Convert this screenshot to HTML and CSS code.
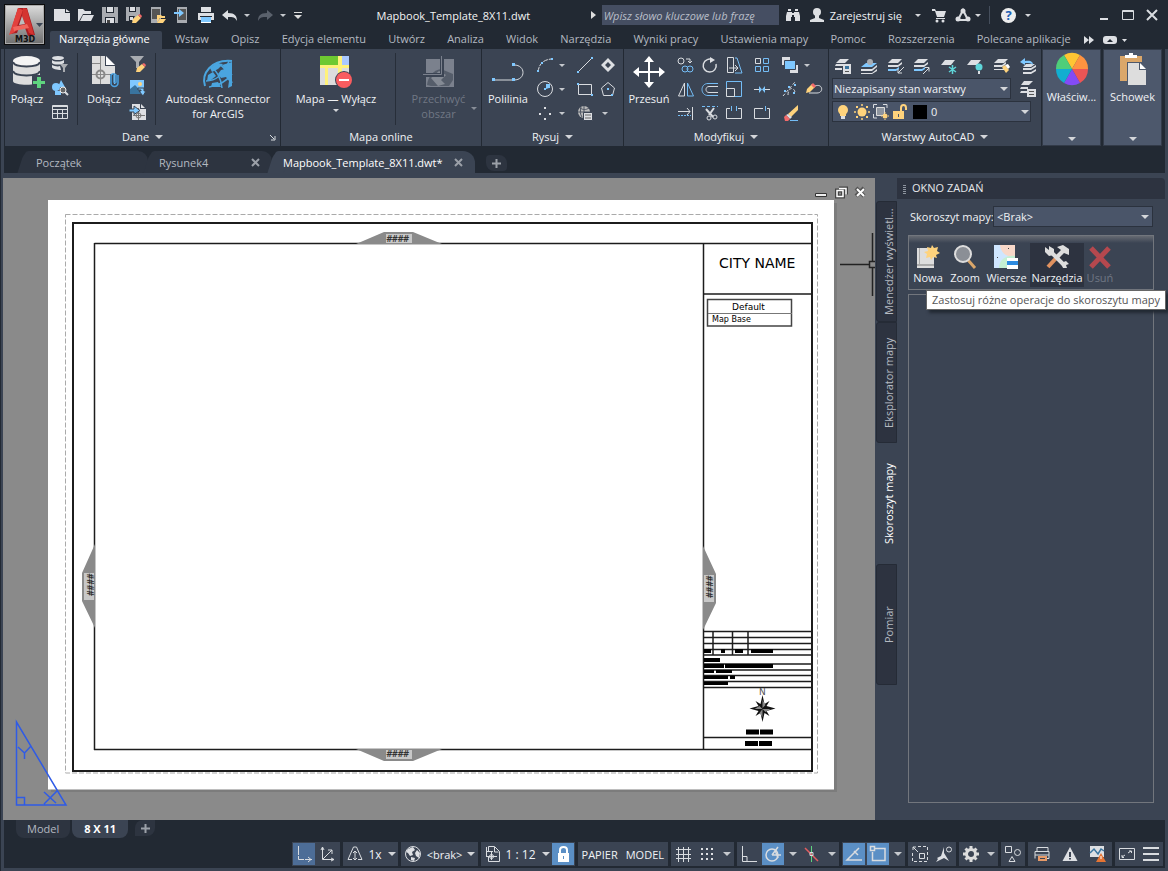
FILE: index.html
```html
<!DOCTYPE html>
<html lang="pl">
<head>
<meta charset="utf-8">
<title>Mapbook_Template_8X11.dwt</title>
<link rel="stylesheet" href="styles.css">
</head>
<body>
<div class="app">
<header class="top">
  <button class="app-menu" aria-label="Menu aplikacji">
    <svg width="40" height="40" viewBox="0 0 40 40"><path fill="#a61d22" d="M13 3h9l8 27-7 1-3-8h-6l-2 5-7 1z"/><path fill="#e2413d" d="M13 3l5 2-8 22-6 3z"/><path fill="#d43431" d="M18 3l4 1 7 26-5-2-7-17z"/><path fill="#f0655c" d="M8 22l14-3 2 4-15 3z"/><path fill="#bdbdbd" d="M17 11l3 8-6 1z"/><path fill="#3c4655" d="M31 18h7l-3.500 4z"/><text x="10" y="37" class="m3d">M3D</text></svg>
  </button>
  <div class="top-main">
    <div class="titlebar">
      <div class="qat">
        <button aria-label="Nowy"><svg class="i"><path class="w" d="M0 2h11v4h5v8H0zM12 2l4 3h-4z"/></svg></button>
        <button aria-label="Otwórz"><svg class="i"><path class="w" d="M0 2h5l2 2h6v3H5l-4 7H0zM5 8h11l-3 6H2z"/></svg></button>
        <button aria-label="Zapisz"><svg class="i"><path class="g" d="M0 0h16v16H0z"/><path fill="#222933" d="M4 0h8v6H4zM3 10h10v6H3z"/><path class="w" d="M5 0h6v5H5zM4 11h8v5H4z"/><path fill="#444" d="M5 13h3v3H5z"/></svg></button>
        <button aria-label="Zapisz jako"><svg class="i"><path class="g" d="M0 0h14v7L7 14H0z"/><path fill="#222933" d="M3 0h7v5H3zM3 9h6l-3 5H3z"/><path class="w" d="M4 0h5v4H4zM4 10h3v3H4z"/><path class="y" d="M6 16l1-4 5-4 3 3-5 5z"/><path class="r" d="M12 8l2-1 2 2-1 2z"/></svg></button>
        <button aria-label="Otwórz z urządzenia"><svg class="i"><path class="g" d="M1 0h10v16H1z"/><path fill="#555" d="M2 2h8v10H2z"/><path class="y" d="M7 8h4l1 1h3v2h-5l-3 4zM10 12h6l-3 4H7z"/></svg></button>
        <button aria-label="Zapisz na urządzeniu"><svg class="i"><path class="g" d="M3 0h10v16H3z"/><path fill="#555" d="M4 2h8v11H4z"/><path class="b" d="M0 5h5V2l5 4-5 4V7H0z"/></svg></button>
        <button aria-label="Drukuj"><svg class="i"><path class="w" d="M3 0h10v5H3zM0 6h16v7H0z"/><path fill="#222933" d="M0 5h16v1H0zM2 9h12v1H2z"/><path class="b" d="M3 10h10v6H3z"/><path stroke="#fff" d="M3 15.500h10"/></svg></button>
        <button aria-label="Cofnij"><svg class="i"><path class="w" d="M0 8l6-5v3c7 0 9 3 9 8-2-4-4-4-9-4v3z"/></svg></button>
        <button class="dd" aria-label="Lista cofania"></button>
        <button aria-label="Ponów"><svg class="i"><path fill="#5a616c" d="M15 8L9 3v3C2 6 0 9 0 14c2-4 4-4 9-4v3z"/></svg></button>
        <button class="dd" aria-label="Lista ponawiania"></button>
        <button class="qat-more" aria-label="Dostosuj"></button>
      </div>
      <h1>Mapbook_Template_8X11.dwt</h1>
      <div class="info">
        <button class="rt" aria-label="Rozwiń wyszukiwanie"></button>
        <input class="search" type="search" placeholder="Wpisz słowo kluczowe lub frazę" aria-label="Szukaj">
        <button aria-label="Szukaj"><svg class="i"><path class="w" d="M3 2h3v2H3zM10 2h3v2h-3zM2 5h5v5H6v4H1v-5zM9 5h5l1 4v5h-5v-4H9zM7 6h2v2H7z"/></svg></button>
        <button class="sign"><svg class="i"><circle cx="8" cy="5" r="4" class="w"/><path class="w" d="M6 8h4v3l5 2v2H1v-2l5-2z"/></svg>Zarejestruj się<i class="dn"></i></button>
        <button aria-label="Sklep"><svg class="i"><path class="w" d="M1 2h3l1 2h10l-2 6H6L4 4H1zM5 11h9v1H5z"/><circle class="w" cx="6" cy="14" r="1.500"/><circle class="w" cx="12" cy="14" r="1.500"/></svg></button>
        <button class="a360" aria-label="Autodesk 360"><svg class="i"><path class="s" stroke-width="2" d="M8 3l5 10H3z"/><circle class="w" cx="8" cy="4" r="2.500"/><circle class="w" cx="3" cy="12" r="2.500"/><circle class="w" cx="13" cy="12" r="2.500"/></svg><i class="dn"></i></button>
        <span class="bar"></span>
        <button class="help" aria-label="Pomoc"><b>?</b><i class="dn"></i></button>
      </div>
      <div class="win">
        <button aria-label="Minimalizuj"><svg class="i"><path class="w" d="M4 10h8v2H4z"/></svg></button>
        <button aria-label="Maksymalizuj"><svg class="i"><path class="s" d="M2.500 2.500h11v9h-11zM2 3.500h12"/></svg></button>
        <button aria-label="Zamknij"><svg class="i"><path class="s" stroke-width="2" d="M3 2l10 10M13 2L3 12"/></svg></button>
      </div>
    </div>
    <nav class="rtabs">
      <a class="on" href="#">Narzędzia główne</a><a href="#">Wstaw</a><a href="#">Opisz</a><a href="#">Edycja elementu</a><a href="#">Utwórz</a><a href="#">Analiza</a><a href="#">Widok</a><a href="#">Narzędzia</a><a href="#">Wyniki pracy</a><a href="#">Ustawienia mapy</a><a href="#">Pomoc</a><a href="#">Rozszerzenia</a><a href="#">Polecane aplikacje</a>
      <button class="rt-end" aria-label="Opcje wstążki"><svg width="42" height="16"><path class="w" d="M0 4l5 4-5 4zM5 4l5 4-5 4z"/><rect class="w" x="19" y="4" width="14" height="8" rx="3"/><path fill="#222933" d="M23 10h6l-3-3z"/><path class="w" d="M38 7h5l-2.500 3z"/></svg></button>
    </nav>
  </div>
</header>

<div class="frame">
<section class="ribbon">
  <div class="panel p-dane">
    <div class="pb">
      <button class="big w44"><svg class="I"><path fill="#ddd" d="M2 5v20c0 5 27 5 27 0V5z"/><ellipse cx="15.500" cy="5" rx="13.500" ry="5" fill="#f4f4f4"/><path fill="none" stroke="#3b4453" stroke-width="2" d="M2 6c2 6 25 6 27 0M2 15c2 6 25 6 27 0"/><path fill="#3b4453" d="M21 19h13v13H21z"/><path fill="#5fd47f" d="M26 21h4v4h4v3h-4v4h-4v-4h-4v-3h4z"/></svg>Połącz</button>
      <div class="col">
        <button aria-label="Filtruj dane"><svg class="i"><ellipse class="w" cx="6" cy="2" rx="6" ry="2"/><path class="w" d="M0 4c2 2 9 2 12 0v3c-3 2-10 2-12 0zM0 9c2 1 6 2 8 1l1 4c-4 0-9-1-9-3z"/><path class="g" d="M8 8h8l-3 4v4h-2v-4z"/></svg></button>
        <button aria-label="Szukaj obiektów"><svg class="i"><circle class="b" cx="4" cy="7" r="4"/><path class="b" d="M9 0l4 7H6zM3 11h6v4H3z"/><circle cx="11" cy="10" r="3" fill="#666" stroke="#eee"/><path class="s" stroke-width="2" d="M13 12l3 3"/></svg></button>
        <button aria-label="Tabela danych"><svg class="i"><path class="s" d="M.5 1.500h15v13H.5zM0 2.500h16M0 5.500h16M0 9.500h16M5.500 5v9M10.500 5v9"/></svg></button>
      </div>
      <span class="sep"></span>
      <button class="big w52"><svg class="I"><path fill="#ddd" d="M4 0h13v10h10v18H4z"/><path fill="#fff" d="M18 0l9 9h-9z"/><path fill="none" stroke="#888" d="M4 7.500h9M12.500 0v28M4 18.500h20"/><circle cx="12.500" cy="18.500" r="4" fill="none" stroke="#888" stroke-width="2"/><path fill="none" stroke="#3b4453" stroke-width="4" d="M24 18v10"/><path fill="none" stroke="#4ba3e3" stroke-width="1.500" d="M26 19v7a1 1 0 002 0v-7a3 3 0 00-5 0v8a3.500 3.500 0 007 0v-8"/></svg>Dołącz</button>
      <div class="col c16">
        <button aria-label="Filtr"><svg class="i"><path class="g" d="M0 0h14L9 6v6H6V6z"/><path class="y" d="M6 16l1-4 5-4 3 3-5 5z"/><path class="r" d="M12 8l2-1 2 2-1 2z"/></svg></button>
        <button aria-label="Wstaw obraz"><svg class="i"><path class="b" d="M0 0h14v14H0z"/><path fill="#39749f" d="M0 9l5-4 5 5 4-2v6H0z"/><circle cx="10" cy="4" r="2" class="y"/><path stroke="#3b4453" fill="#7fc8ff" d="M8 8h6v3h2l-3 5-4-5h2v-1H8z"/></svg></button>
        <button aria-label="Importuj mapę"><svg class="i"><path class="w" d="M2 0h8v5h6v11H2z"/><path class="w" d="M11 0l4 4h-4z"/><path stroke="#777" fill="none" d="M8.500 4v12M3 11.500h12"/><circle cx="8.500" cy="11.500" r="2.500" fill="none" stroke="#777"/><path class="b" stroke="#3b4453" d="M-1 5h5V2l6 4.500-6 4V8h-5z"/></svg></button>
      </div>
      <span class="sep s8"></span>
      <button class="big grow"><svg class="I"><g fill="none" stroke="#4aa5df" stroke-width="1.500"><path stroke-width="2" d="M3 30C-1 18 9 3 30 5"/><path d="M9 12c5 1 10 10 11 20M4 25c9 0 18-6 23-20M7 31c8-1 16-4 23-13M15 7c6 3 12 9 15 20"/></g><path fill="#4aa5df" d="M8 12l6-5 7 1-5 5-6 3zM20 9l10-3v24l-4 2 1-7-3-4-5 1-3-4 3-4 4-1zM6 19l5-3 3 4-5 4-4 1zM10 27l6-1 3 5H9z"/></svg>Autodesk Connector<br>for ArcGIS</button>
    </div>
    <div class="pt">Dane <i class="dn"></i><svg class="launch" width="7" height="7"><path class="s" d="M1 1l4 4M6 2v4H2"/></svg></div>
  </div>
  <div class="panel p-online">
    <div class="pb">
      <button class="big w110"><svg class="I"><path fill="#ddd" d="M0 0h29v29H0z"/><path fill="#6ec931" d="M0 0h18v9H0z"/><path fill="#a9c8ff" d="M22 0h7v9h-7z"/><path fill="#fff27a" d="M0 9h29v3H0zM18 0h4v29h-4zM5 12h3v17H5z"/><circle cx="24" cy="24" r="9" fill="#3b4453"/><circle cx="24" cy="24" r="8" fill="#f95c5f"/><path fill="#fff" d="M19 23h10v2H19z"/></svg>Mapa — Wyłącz<i class="dn"></i></button>
      <span class="sep s4"></span>
      <button class="big grow off" disabled><svg class="I"><path fill="#7b818d" d="M3 3h28v28H3z"/><path fill="#555d6a" d="M4 29c1-8 6-15 14-16l12 5v6l-4 6H8z"/><path fill="#848a94" d="M8 22l8-7 7 4-5 5 4 4-7 2z"/><path fill="none" stroke="#3b4453" stroke-width="4" d="M0 19h19V0"/><path fill="none" stroke="#7b818d" d="M0 18.500h18.500V0"/></svg>Przechwyć<br>obszar<i class="dn"></i></button>
    </div>
    <div class="pt">Mapa online</div>
  </div>
  <div class="panel p-rysuj">
    <div class="pb">
      <button class="big w52"><svg class="I"><path class="s" d="M2 24h19M22 9c12 0 12 15 0 15"/><path class="b" d="M0 22h3v3H0zM20 22h3v3h-3zM20 7h3v3h-3z"/></svg>Polilinia</button>
      <div class="grid g-rysuj">
        <button aria-label="Łuk"><svg class="i"><path class="s" stroke-dasharray="5 1" d="M1 15C2 7 6 3 14 2"/><path class="b" d="M0 13h2v2H0zM4 5h2v2H4zM14 1h2v2h-2z"/></svg></button><button class="dd" aria-label="Więcej łuków"></button>
        <button aria-label="Linia"><svg class="i"><path class="s" d="M1 15L15 1"/><path class="b" d="M0 14h2v2H0zM14 0h2v2h-2z"/></svg></button>
        <button aria-label="Region"><svg class="i"><path fill-rule="evenodd" class="w" d="M8 1l7 7-7 7-7-7zM8 5L5 8l3 3 3-3z"/></svg></button>
        <button aria-label="Okrąg"><svg class="i"><circle class="s" cx="8" cy="8" r="7.500"/><path class="b" d="M7 7h2v2H7zM9 3h4v4h-1L9 8z"/></svg></button><button class="dd" aria-label="Więcej okręgów"></button>
        <button aria-label="Prostokąt"><svg class="i"><path class="s" d="M1.500 3.500h13v10h-13z"/><path class="b" d="M0 2h2v2H0zM14 13h2v2h-2z"/></svg></button>
        <button aria-label="Wielobok"><svg class="i"><path class="s" d="M8 1.500L14.500 7l-2 7.500h-9L1.500 7z"/><path class="b" d="M7 7h2v2H7zM11 13h2v2h-2z"/></svg></button>
        <button aria-label="Punkt"><svg class="i"><path class="w" d="M7 2h2v2H7zM2 8h2v2H2zM12 8h2v2h-2zM7 13h2v2H7z"/></svg></button><button class="dd" aria-label="Więcej punktów"></button>
        <button aria-label="Globus"><svg class="i"><circle cx="7" cy="7" r="6" fill="#bbb"/><path stroke="#4a5260" fill="none" d="M7 1v12M1 7h12M3 3c3 2 6 2 9 0M4 2c-1 4-1 7 1 10"/><path class="w" stroke="#3b4453" d="M6.500 7.500h9v8h-9z"/><path stroke="#666" d="M8 10h6M8 13h6"/></svg></button><button class="dd end" aria-label="Więcej opcji"></button>
      </div>
    </div>
    <div class="pt">Rysuj <i class="dn"></i></div>
  </div>
  <div class="panel p-mod">
    <div class="pb">
      <button class="big w50"><svg class="I"><path fill="#fff" d="M16 0l5 6h-4v9h9v-4l6 5-6 5v-4h-9v9h4l-5 6-5-6h4v-9H6v4l-6-5 6-5v4h9V6h-4z"/></svg>Przesuń</button>
      <div class="grid g-mod">
        <button aria-label="Kopiuj"><svg class="i"><circle class="s" cx="3" cy="4" r="3"/><circle class="bs" cx="7" cy="12" r="3"/><circle class="bs" cx="12" cy="12" r="3"/><path class="s" d="M8 2h4v4M10 4l2 2 2-2"/></svg></button>
        <button aria-label="Obrót"><svg class="i"><path class="s" stroke-width="1.500" d="M11 3a6.500 6.500 0 103 4"/><path class="w" d="M8 0l5 3-5 3z"/></svg></button>
        <button aria-label="Rozciągnij"><svg class="i"><path class="s" d="M1.500 .5h6v15h-6zM3 11h8M9 8l3 3-3 3"/><path class="bs" d="M9 1h2l5 15H9"/></svg></button>
        <button aria-label="Szyk"><svg class="i"><path class="s" d="M1.500 1.500h5v5h-5z"/><path class="bs" d="M9.500 1.500h5v5h-5zM1.500 9.500h5v5h-5zM9.500 9.500h5v5h-5z"/></svg></button>
        <button aria-label="Kolejność"><svg class="i"><path class="w" d="M0 0h8v4H4v4H0zM8 12h5V8h3v8H8z"/><path class="b" stroke="#3b4453" d="M2.500 3.500h11v9h-11z"/></svg></button><button class="dd" aria-label="Więcej kolejności"></button>
        <button aria-label="Lustro"><svg class="i"><path class="s" d="M6.500 2v13H.5z"/><path class="bs" d="M9.500 2v13h6z"/></svg></button>
        <button aria-label="Odsunięcie"><svg class="i"><path class="bs" d="M16 2.500H6c-8 0-8 12 0 12h10"/><path class="s" d="M16 5.500H7c-4 0-4 6 0 6h9"/></svg></button>
        <button aria-label="Skala"><svg class="i"><path class="bs" d="M.5 8V.5h15v15H8"/><path class="s" d="M.5 7.500h8v8h-8z"/></svg></button>
        <button aria-label="Dołącz"><svg class="i"><path class="s" d="M0 8.500h5M11 8.500h5"/><path class="b" d="M5 5l3 3.500L5 12zM11 5L8 8.500l3 3.500z"/></svg></button>
        <button aria-label="Edytuj polilinię"><svg class="i"><path class="s" d="M1 15L13 1M6 14c0-8 6-8 7-3" stroke-dasharray="3 2"/><path class="b" d="M2 9h2v2H2zM6 5h2v2H6zM12 3h2v2h-2zM11 11h2v2h-2z"/></svg></button>
        <button aria-label="Edytuj splajn"><svg class="i"><path class="s" d="M9 5c8-3 9 7 2 7H3"/><path class="y" d="M0 12l1-4 5-5 3 3-5 5z"/><path class="r" d="M5 4l2-2 3 3-2 2z"/></svg></button>
        <button aria-label="Wydłuż"><svg class="i"><path class="s" d="M0 6.500h12M14.500 2v13M9 3l3 3.500L9 10"/><path class="bs" stroke-dasharray="2 1" d="M0 10.500h13"/></svg></button>
        <button aria-label="Utnij"><svg class="i"><path class="bs" stroke-dasharray="3 2" d="M0 1.500h16"/><path class="s" stroke-width="2" d="M4 4l7 8M12 3L7 10"/><circle class="s" cx="7" cy="13" r="2"/><circle class="s" cx="13" cy="12" r="2"/></svg></button>
        <button aria-label="Przerwij"><svg class="i"><path class="s" d="M4 3.500H.5v10h15v-10H12"/><path class="bs" d="M5.500 1v5M10.500 1v5"/></svg></button>
        <button aria-label="Przerwij w punkcie"><svg class="i"><path class="s" d="M9 3.500H.5v10h15v-10H13"/><path class="bs" d="M11.500 1v5"/></svg></button>
        <button aria-label="Wymaż"><svg class="i"><path class="y" d="M6 9l10-9v5l-7 7z"/><path class="w" d="M4 10l2-1 4 3-2 2z"/><path class="r" d="M2 12l2-2 4 4-2 2H3z"/><path class="bs" d="M8 15.500h8"/></svg></button>
      </div>
    </div>
    <div class="pt">Modyfikuj <i class="dn"></i></div>
  </div>
  <div class="panel p-war">
    <div class="pb war">
      <div class="wr">
        <button aria-label="Właściwości warstw"><svg class="i"><path class="w" d="M5 1h9l-4 4H1zM1 6h7v2H0zM0 10h7v2H0z"/><path class="w" d="M8 6h8v10H8z"/><path fill="#39749f" d="M10 8h4v3h-4z"/><path stroke="#555" d="M10 13.500h4"/></svg></button>
        <button aria-label="Ustaw bieżącą"><svg class="i"><path class="b" d="M5 5h11l-5 4H0z"/><path class="w" d="M0 11h11l5-4v2l-5 4H0zM0 15h11l5-4v2l-5 3H0z"/><circle class="g" cx="9" cy="4" r="3"/></svg></button>
        <button aria-label="Dopasuj"><svg class="i"><path class="w" d="M4 1h10l-4 4H0zM0 7h10l4-3v2l-4 3H0z"/><path class="b" d="M0 11h8l3-2v2l-3 2H0z"/><path class="s" d="M16 9l-6 6M10 11v4h4"/></svg></button>
        <button aria-label="Poprzednia"><svg class="i"><path class="w" d="M4 1h10l-4 4H0zM0 7h10l4-3v2l-4 3H0z"/><path class="b" d="M0 11h8l3-2v2l-3 2H0z"/><path class="s" d="M9 16l6-6M11 9.500h4v4"/></svg></button>
        <button aria-label="Zamroź"><svg class="i"><path class="w" d="M4 2h10l-4 5H0z"/><path stroke="#5fd6da" stroke-width="1.500" d="M11.500 7v9M8 9l7 5M15 9l-7 5"/></svg></button>
        <button aria-label="Wyłącz"><svg class="i"><path class="w" d="M4 2h10l-4 5H0z"/><circle cx="12" cy="9" r="3.500" fill="#5fd6da"/><path class="w" d="M11 13h2v3h-2z"/></svg></button>
        <button aria-label="Dopasuj warstwę"><svg class="i"><path class="w" d="M4 1h10l-4 4H0zM0 7h8l4-3v2l-4 3H0zM0 11h8l2-1v2H0z"/><path class="y" d="M8 9l3-2 4 5-3 3z"/><path fill="#fff" d="M11 7l3-1 2 3-2 2z"/></svg></button>
        <button aria-label="Przywróć"><svg class="i"><path class="w" d="M6 6h9l-4 3H3zM3 10h8l5-3v2l-5 3H3zM3 14h8l5-3v2l-5 3H3z"/><path class="b" d="M0 4l5-4v3c6-1 8 1 8 4-2-2-4-2-8-2v2z"/></svg></button>
      </div>
      <div class="wr2"><select aria-label="Stan warstwy"><option>Niezapisany stan warstwy</option></select>
        <button aria-label="Menedżer stanów"><svg class="i"><path class="w" d="M4 0h9L9 4H1zM1 6h7v2H0zM1 10h6v2H0zM7 8h9v8H7z"/><path stroke="#555" d="M9 10.500h5M9 13.500h5"/></svg></button></div>
      <div class="layer">
        <button aria-label="Widoczność"><svg class="i"><circle class="y" cx="8" cy="6" r="5"/><path class="y" d="M5 9h6v3H5z"/><path class="w" d="M6 12h4v3H6z"/></svg></button>
        <button aria-label="Zamrożenie"><svg class="i"><circle class="y" cx="8" cy="8" r="4.500"/><path stroke="#ffd37c" stroke-width="1.500" stroke-dasharray="2 12" d="M8 0v16M0 8h16"/><path class="y" d="M2 2h2v2H2zM12 2h2v2h-2zM2 12h2v2H2zM12 12h2v2h-2z"/></svg></button>
        <button aria-label="Rzutnia"><svg class="i"><path class="s" d="M.5 4V.5H4M10 .5h4V4M.5 10v4H4"/><path fill="#8e959f" stroke="#ddd" d="M3.500 3.500h8v8h-8z"/><circle class="y" cx="12" cy="12" r="2.500"/><path stroke="#ffd37c" stroke-dasharray="1 6" d="M12 8v8M8 12h8"/></svg></button>
        <button aria-label="Blokada"><svg class="i"><path class="y" d="M1 7h11v8H1z"/><path fill="none" stroke="#ffd37c" stroke-width="2" d="M9 8V4c0-4 5-4 5 0v2"/><path fill="#4d586c" d="M6 10h1v3H6z"/></svg></button>
        <span class="swatch"></span>
        <select aria-label="Warstwa"><option>0</option></select>
      </div>
    </div>
    <div class="pt">Warstwy AutoCAD <i class="dn"></i></div>
  </div>
  <button class="fold"><svg class="I"><g transform="translate(16 16)"><path fill="#ffc533" d="M0 0L-8-14A16 16 0 018-14z"/><path fill="#ff9340" d="M0 0L8-14A16 16 0 0116 0z"/><path fill="#ec5555" d="M0 0h16A16 16 0 018 14z"/><path fill="#844bf5" d="M0 0L8 14A16 16 0 01-8 14z"/><path fill="#12aed0" d="M0 0L-8 14A16 16 0 01-16 0z"/><path fill="#4fce7a" d="M0 0h-16A16 16 0 01-8-14z"/></g></svg>Właściw...<i class="dn"></i></button>
  <button class="fold"><svg class="I"><path fill="#dba76a" d="M3 3h22v25H3z"/><path fill="#fff" d="M8 5V2h4V0h4v2h4v3z"/><path fill="#4d586c" d="M10 9h20v23H10z"/><path fill="#ddd" d="M11 10h11v7h7v15H11z"/><path fill="#fff" d="M23 10l6 6h-6z"/></svg>Schowek<i class="dn"></i></button>
</section>

<div class="ftabs">
  <div class="ft t1"><a href="#">Początek</a></div>
  <div class="ft t2"><a href="#">Rysunek4</a><button aria-label="Zamknij Rysunek4"><svg class="x"><path d="M1 1l7 7M8 1L1 8"/></svg></button></div>
  <div class="ft t3 on"><a href="#">Mapbook_Template_8X11.dwt*</a><button aria-label="Zamknij rysunek"><svg class="x"><path d="M1 1l7 7M8 1L1 8"/></svg></button></div>
  <button class="plus" aria-label="Nowy rysunek"><svg class="x"><path d="M4.500 0v9M0 4.500h9"/></svg></button>
</div>

<main class="work">
  <div class="canvas">
  <svg class="sheet" viewBox="3 178 872 642" preserveAspectRatio="xMidYMid slice">
    <rect x="51" y="203" width="786" height="589" fill="#7c7c7c"/>
    <rect x="48" y="200" width="786" height="589.500" fill="#fff"/>
    <path d="M65.500 214.500h752v558.500h-752z" class="dash"/>
    <g class="ln"><path stroke-width="2" d="M73 223h739v548H73z"/><path d="M94.500 243.500H812M94.500 243v507M94 749.500h718M703.500 243v507M704 294h108"/><path stroke="#444" d="M707.500 299.500h84V326h-84z"/><path stroke="#777" stroke-width="1" d="M708 313.500h84"/>
    <path d="M704 631.500h108M704 637.500h108M704 643.500h108M704 649.500h108M704 655h108M704 664h108M704 670h108M704 675.500h108M704 681.500h108M704 687.500h108M713 631v24M732.500 631v24M748 631v24M704 737.500h108"/></g>
    <path d="M704 649h7v4h-7zM721 649h4v4h-4zM735 649h8v4h-8zM751 649h22v4h-22zM704 658h16v4h-16zM704 664h20v4h-20zM725 664h48v4h-48zM704 670h10v3h-10zM716 670h16v3h-16zM704 676h24v3h-24zM730 676h5v3h-5zM704 682h24v3h-24zM746 729.500h13v5h-13zM760 729.500h13v5h-13zM745 741h13v5h-13zM759 741h13v5h-13z"/>
    <text class="city" x="719" y="268">CITY NAME</text>
    <text class="leg" x="732" y="310">Default</text><text class="leg small" x="712" y="322">Map Base</text>
    <text class="north" x="759" y="695">N</text>
    <path fill="#111" d="M762.500 695l2 9 5-3-3 5 9 2.500-9 2.500 3 5-5-3-2 9-2-9-5 3 3-5-9-2.500 9-2.500-3-5 5 3z"/><path fill="#888" d="M762.500 700v8l3-3zM762.500 709h8l-5 3zM762.500 709v8l-3-4zM762.500 709h-8l5-3z"/>
    <g fill="#8a8a8a"><path d="M356 244l28-12h29l29 12zM356 749l28 12h29l29-12zM95 544l-13 29v28l13 27zM703 546l13 28v29l-13 27z"/></g>
    <g fill="#c8c8c8"><path d="M386 234h26v9h-26zM386 750h26v9h-26zM84 573h10v27H84zM704 575h10v27h-10z"/></g>
    <g class="hash"><text x="386" y="242">####</text><text x="386" y="757">####</text><text transform="translate(87 573) rotate(90)">####</text><text transform="translate(706 575) rotate(90)">####</text></g>
    <path fill="none" stroke="#2f5be6" stroke-width="1.500" d="M16.500 722v83H66zM16.500 797.500h8v8M18 747l6.500 6 6.500-7M24.500 753v6M44 792l12 11M57 791l-13 13"/>
    <path fill="none" stroke="#222" stroke-width="1.500" d="M840 264.500h29M872.500 233v28M872.500 268v28M869.500 261.500h7v6h-7z"/>
    <g stroke="#333" fill="none"><path fill="#eee" d="M815.500 193.500h11v3h-11z"/><path stroke="#444" stroke-width="4" d="M837 190.500h6v6h-6zM839 188.500h7v6"/><path stroke="#fff" stroke-width="1.500" d="M837 190.500h6v6h-6zM839 188.500h7v6"/><path stroke="#555" stroke-width="4" d="M856 188l8 8M864 188l-8 8"/><path stroke="#fff" stroke-width="2" d="M857 189l7 7M864 189l-7 7"/></g>
  </svg>
  </div>
  <aside class="pane">
    <div class="vtabs"><button>Menedżer wyświetl...</button><button>Eksplorator mapy</button><button class="on">Skoroszyt mapy</button><button>Pomiar</button></div>
    <div class="task">
      <h2>OKNO ZADAŃ</h2>
      <div class="pick"><label for="sk">Skoroszyt mapy:</label><select id="sk"><option>&lt;Brak&gt;</option></select></div>
      <div class="tools">
        <button class="t38"><svg class="m"><path fill="#ddd" d="M2 3h17v20H2z"/><path fill="#aaa" d="M2 19h17v2H2zM4 3h1v16H4z"/><path fill="#ffd37c" d="M17 0l2 3 4-1-1 4 3 2-4 2 1 3-4-1-2 3-1-3-4 1 1-4-3-2 4-1-1-4 4 1z"/></svg>Nowa</button>
        <button class="t36"><svg class="m"><path stroke="#dba76a" stroke-width="3" d="M16 15l7 8"/><circle cx="11" cy="9" r="8" fill="#8b8f96" stroke="#ddd" stroke-width="2"/></svg>Zoom</button>
        <button class="t46"><svg class="m"><path fill="#cfe6ff" d="M0 0h21v23H0z"/><path fill="#f8d8c9" d="M6 0h15v11C14 13 7 9 6 0z"/><path fill="#c5f0d3" d="M5 23c0-8 7-13 16-12v12z"/><path fill="#fff" d="M13 13h11v11H13z"/><path fill="#2d8be0" d="M13 16h11v4H13z"/><path fill="#444" d="M3 12h1v1H3zM14 3h1v1h-1z"/></svg>Wiersze</button>
        <button class="t54 on"><svg class="m"><path stroke="#e0925f" stroke-width="4" d="M4 22L15 10"/><path stroke="#ddd" stroke-width="4" d="M6 6l15 15"/><path fill="#ddd" d="M1 2l4 3V1l5 3v6l-5 1-4-4zM13 2l6-2 6 4v6l-5-2-5 5-3-3 5-5zM17 18l5-2 3 3-3 1 1 3h-4z"/></svg>Narzędzia</button>
        <button class="t36 off" disabled><svg class="m"><path stroke="#b5484e" stroke-width="5" d="M4 3l18 19M22 3L4 22"/></svg>Usuń</button>
        <div class="tip" role="tooltip">Zastosuj różne operacje do skoroszytu mapy</div>
      </div>
      <div class="tree"></div>
    </div>
  </aside>
</main>

<footer>
  <div class="ltabs"><a class="lt" href="#">Model</a><a class="lt on" href="#">8 X 11</a><button class="lplus" aria-label="Nowy układ"><svg class="x"><path d="M4.500 0v9M0 4.500h9"/></svg></button></div>
  <div class="status">
    <div class="sg"><button class="on dim" aria-label="Obszar modelu"><svg class="i"><path class="s" d="M2.500 0v13.500H16M12 11l3 2.500-3 2.500" stroke-dasharray="9 1"/></svg></button><button aria-label="LUW"><svg class="i"><path class="s" d="M2.500 1v12.500H14M3 13L12 4M8 4h4v4M1 4l1.500-3L4 4M11 12l3 1.500-3 1.500"/></svg></button></div>
    <div class="sg"><button aria-label="Skala opisu"><svg class="i"><path class="s" d="M1 13.500L6.500 1h3L15 13.500h-4M1 13.500h4M8 5v9M6 7l2-2 2 2M6 12l2 2 2-2"/></svg></button><button class="tx s31">1x<i class="dn"></i></button></div>
    <div class="sg"><button aria-label="Układ współrzędnych"><svg class="i"><circle cx="8" cy="8" r="7.500" class="s"/><path class="w" d="M3 3l5-2 2 3-3 2 1 3-3 1-2-3-2-1zM12 4l3 3-1 5-3-2-1-3zM6 11l4 1-1 3-3-1z"/></svg></button><button class="tx s54">&lt;brak&gt;<i class="dn"></i></button></div>
    <div class="sg"><button aria-label="Skala rzutni"><svg class="i"><path class="s" d="M3.500 6V.5h6l5 5v10h-11V10M9.500 1v5h4M1 5.500h7M1 10.500h11M6.500 6v8M1.500 1v9"/><circle cx="6.500" cy="10.500" r="2" class="s"/></svg></button><button class="tx s46">1 : 12<i class="dn"></i></button><button class="on" aria-label="Blokada"><svg class="i"><path fill="#fff" d="M3 7h11v9H3z"/><path fill="none" stroke="#fff" stroke-width="2" d="M5 8V4c0-4 7-4 7 0v4"/><path fill="#5b8fc5" d="M8 10h1v3H8z"/></svg></button></div>
    <div class="sg"><button class="tx cap">PAPIER</button><button class="tx cap">MODEL</button></div>
    <div class="sg"><button aria-label="Siatka"><svg class="i"><path class="s" d="M3.500 1v15M8.500 1v15M13.500 1v15M1 3.500h15M1 8.500h15M1 12.500h15"/></svg></button><button aria-label="Skok"><svg class="i"><path class="w" d="M2 2h2v2H2zM7 2h2v2H7zM12 2h2v2h-2zM2 7h2v2H2zM7 7h2v2H7zM12 7h2v2h-2zM2 12h2v2H2zM7 12h2v2H7zM12 12h2v2h-2z"/></svg></button><button class="dd" aria-label="Opcje skoku"></button></div>
    <div class="sg"><button aria-label="Orto"><svg class="i"><path class="s" d="M1.500 0v15.500H16M1 10.500h5v5"/></svg></button><button class="on" aria-label="Biegunowe"><svg class="i"><circle cx="7" cy="9" r="6" class="s" stroke-width="1.500"/><path class="s" stroke-width="1.500" d="M7 9l6-8M7 9h9M10 4l3 8"/></svg></button><button class="dd" aria-label="Opcje biegunowe"></button><button aria-label="Izometria"><svg class="i"><path stroke="#5fd47f" d="M7.500 0v16"/><path stroke="#e35d60" stroke-width="1.500" d="M1 2l13 13"/><path class="s" d="M6 6.500h3v3H6z"/></svg></button><button class="dd" aria-label="Opcje izometrii"></button></div>
    <div class="sg"><button class="on" aria-label="Śledzenie"><svg class="i"><path class="s" stroke-width="1.500" d="M16 14H1L13 2M8 5l4 4"/></svg></button><button class="on" aria-label="Lokalizacja"><svg class="i"><path class="s" stroke-width="1.500" d="M5 2.500h10v12H2.500V6M.5 .5h4v4h-4z"/></svg></button><button class="dd" aria-label="Opcje lokalizacji"></button></div>
    <div class="sg"><button aria-label="Monitor"><svg class="i"><path class="s" stroke-dasharray="3 2" d="M6 .5h9.500v15H.5V6"/><path class="s" d="M7.500 7.500h5v5h-5zM1 1l5 5M1 4V1h3"/></svg></button><button aria-label="Opisy"><svg class="i"><path class="w" d="M8 1v6l5 8-5-3-6 3-2 1 2-3-1-1 4-2z"/><circle cx="13" cy="3.500" r="2.500" class="s"/></svg></button></div>
    <div class="sg"><button aria-label="Ustawienia"><svg class="i"><circle cx="8" cy="8" r="4.500" fill="none" stroke="#ddd" stroke-width="3"/><path stroke="#ddd" stroke-width="3" stroke-dasharray="3 10" d="M8 0v16M0 8h16M2.500 2.500l11 11M13.500 2.500l-11 11"/></svg></button><button class="dd" aria-label="Obszar roboczy"></button></div>
    <div class="sg"><button aria-label="Izoluj obiekty"><svg class="i"><path class="s" d="M.5 .5h6v6h-6zM4 15.500l3-5 3 5z"/><circle class="s" cx="12.500" cy="6.500" r="3"/></svg></button></div>
    <div class="sg print"><button aria-label="Drukowanie"><svg class="i"><path class="s" d="M3 5V1.500h11V5M1 12.500v-7h14v7h-2M1 9h14"/><path fill="#e79a68" d="M4 10h9v5H4z"/><path fill="#3b4453" d="M6 12h5v1H6z"/></svg></button><button aria-label="Ostrzeżenie"><svg class="i"><path class="w" d="M8 1l7.500 14H.5z"/><path fill="#3b4453" d="M7 6h2v5H7zM7 12h2v1.500H7z"/></svg></button><button aria-label="Wydajność"><svg class="i"><path class="w" d="M0 0h14v11H0z"/><path fill="none" stroke="#39749f" stroke-width="1.500" d="M0 7l4-4 4 5 3-5 3 2"/><path fill="#e67433" d="M11 7l5 9H6z"/><path fill="#fff" d="M10.500 10h1v3h-1z"/></svg></button></div>
    <div class="sg"><button aria-label="Pełny ekran"><svg class="i"><path class="s" d="M.5 2.500h15v11H.5zM9 7l3-2M10 5h2.500v2M6 9l-3 2M3 9v2.500h2"/></svg></button><button aria-label="Dostosuj"><svg class="i"><path class="s" stroke-width="2" d="M0 2h16M0 8h16M0 14h16"/></svg></button></div>
  </div>
</footer>
</div>
</div>
</body>
</html>
```
FILE: styles.css
```css
* { box-sizing: border-box; }
body { margin: 0; background: #222933; color: #f0f2f5; font: 11px/15px "Open Sans", "Noto Sans", sans-serif; overflow: hidden; }
button { font: inherit; color: inherit; background: none; border: 0; padding: 0; margin: 0; display: flex; align-items: center; justify-content: center; white-space: nowrap; }
a { color: inherit; text-decoration: none; white-space: nowrap; }
svg { display: block; flex: none; overflow: visible; }
h1, h2 { margin: 0; font: inherit; }
.i { width: 16px; height: 16px; }
.I { width: 32px; height: 32px; }
.m { width: 26px; height: 24px; }
.w { fill: #dddfe3; }
.g { fill: #a9acb1; }
.b { fill: #7fc8ff; }
.y { fill: #ffd37c; }
.r { fill: #f36a6a; }
.s { fill: none; stroke: #d9dce0; }
.bs { fill: none; stroke: #74bdf6; }
.dn { display: inline-block; border: 4px solid transparent; border-top-color: #d4d6da; border-bottom-width: 0; }
.dd::before { content: ""; border: 3px solid transparent; border-top-color: #c6c9ce; border-bottom-width: 0; }

/* title bar and ribbon tabs */
.app { min-height: 100vh; display: flex; flex-direction: column; }
.top { display: flex; height: 49px; }
.app-menu { width: 41px; height: 41px; margin: 4px 5px 0 4px; background: linear-gradient(#dcdcdc, #6e6e6e); border: 1px solid #0c0c0c; outline: 1px solid #aaa; outline-offset: -2px; }
.m3d { font: bold 8px "DejaVu Sans", sans-serif; fill: #111; }
.top-main { flex: 1; min-width: 0; display: flex; flex-direction: column; }
.titlebar { display: flex; align-items: center; height: 31px; }
.qat { display: flex; align-items: center; width: 256px; padding: 0 0 1px 4px; gap: 8px; }
.qat .dd { width: 8px; margin: 0 -3px; }
.qat .dd + button { margin-left: 2px; }
.qat-more { flex-direction: column; gap: 2px; }
.qat-more::before { content: ""; width: 8px; border-top: 1px solid #ddd; }
.qat-more::after { content: ""; border: 4px solid transparent; border-top-color: #ddd; border-bottom-width: 0; }
h1 { flex: 1; text-align: center; padding-left: 10px; color: #f4f4f4; }
.info { display: flex; align-items: center; gap: 8px; padding-bottom: 1px; }
.rt::before { content: ""; border: 4px solid transparent; border-left: 5px solid #ddd; border-right: 0; }
.search { width: 177px; height: 20px; border: 0; background: #454e62; color: #ddd; font: italic 11px "Open Sans", sans-serif; padding: 0 2px; margin-right: -2px; margin-left: -2px; border-radius: 0; }
.search::placeholder { color: #b9bec8; opacity: 1; }
.sign { gap: 5px; }
.sign .dn { margin: 0 2px 0 8px; border-width: 3px 3px 0; }
.a360 .dn { margin-left: 4px; border-width: 3px 3px 0; }
.bar { width: 1px; height: 18px; background: #454e5c; }
.help { padding-left: 3px; gap: 9px; }
.help b { width: 15px; height: 15px; border-radius: 8px; background: #eee; color: #205fb5; font-size: 13px; line-height: 15px; }
.help .dn { border-width: 3px 3px 0; }
.win { display: flex; gap: 8px; margin-left: 65px; padding-right: 8px; }
.rtabs { display: flex; align-items: stretch; justify-content: space-between; height: 18px; color: #b4b9c1; padding-right: 42px; }
.rtabs a { line-height: 16px; }
.rtabs .on { background: #3b4453; color: #fff; border-radius: 2px 2px 0 0; padding: 0 12px 0 9px; margin-right: -9px; }
.rt-end { width: 42px; margin-left: -9px; }

/* ribbon */
.frame { flex: 1; display: flex; flex-direction: column; border: solid #3b4453; border-width: 0 3px 3px; margin-left: 1px; }
.ribbon { display: flex; height: 97px; padding: 0 3px 0 1px; gap: 1px; }
.panel { background: #3b4453; display: flex; flex-direction: column; min-width: 0; }
.p-dane { flex: 1 1 275px; }
.p-online { flex: 1 1 200px; }
.p-rysuj { flex: 1 1 141px; }
.p-mod { flex: 1 1 204px; }
.p-war { flex: 1 1 212px; }
.pb { flex: 1; display: flex; padding-top: 4px; }
.pt { height: 19px; line-height: 19px; text-align: center; position: relative; }
.pt .dn { margin: 0 0 2px 3px; }
.launch { position: absolute; right: 4px; bottom: 5px; }
.big { flex-direction: column; justify-content: flex-start; padding-top: 3px; line-height: 15px; white-space: normal; }
.big > svg { margin-bottom: 3px; }
.big .dn { border-width: 3px 3px 0; margin-top: 3px; }
.w44 { width: 44px; }
.w50 { width: 50px; }
.w52 { width: 52px; }
.w110 { width: 110px; }
.grow { flex: 1; min-width: 0; }
.off { color: #707784; position: relative; }
.off .dn { position: absolute; right: 4px; top: 51px; }
.big.off .dn { border-top-color: #888e98; }
.col { display: flex; flex-direction: column; gap: 8px; padding-top: 3px; width: 22px; align-items: center; }
.c16 { width: 16px; }
.sep { width: 1px; background: #272e39; margin: 0 0 2px 6px; }
.s8 { margin-left: 9px; }
.s4 { margin-left: 4px; }
.grid { display: grid; grid-auto-rows: 24px; justify-items: center; }
.g-rysuj { grid-template-columns: 22px 12px 34px 12px; }
.g-rysuj > .end { justify-self: start; }
.g-mod { grid-template-columns: 24px 24px 24px 32px 24px 24px; }
.g-mod > :nth-child(6) { justify-self: start; padding-left: 2px; }
select { appearance: none; color: #f0f2f5; font: 11px "Open Sans", sans-serif; background: #4a5569; border: 1px solid #2b323e; border-radius: 0; padding: 0 3px; height: 21px; min-width: 0; }
.wr2, .layer, .pick { position: relative; }
.war { flex-direction: column; padding: 7px 5px 0 3px; gap: 2px; }
.wr { display: flex; justify-content: space-between; padding: 0 0 0 3px; height: 20px; }
.wr2 { display: flex; gap: 9px; }
.wr2 select { flex: 1; padding: 0 1px; }
.wr2::after, .layer::after, .pick::after { content: ""; position: absolute; right: 28px; top: 9px; border: 4px solid transparent; border-top-color: #d4d6da; border-bottom-width: 0; pointer-events: none; }
.layer { display: flex; align-items: center; gap: 3px; background: #4a5569; border: 1px solid #2b323e; height: 21px; padding-left: 2px; margin: 0 5px 0 0; }
.layer select { border: 0; flex: 1; height: 18px; background: transparent; padding: 0 1px; }
.layer::after { right: 1px; top: 8px; }
.swatch { width: 14px; height: 14px; background: #000; margin-left: 2px; }
.fold { flex: 1 1 59px; flex-direction: column; justify-content: flex-start; background: #4d586c; border: 1px solid #333b49; padding: 3px 0 4px; }
.fold + .fold { margin-left: 1px; }
.fold svg { margin-bottom: 4px; }
.fold .dn { margin-top: auto; }

/* drawing tabs */
.ftabs { display: flex; align-items: flex-end; height: 32px; padding: 0 0 5px 21px; background: linear-gradient(#222933 27px, #3b4453 27px); color: #b4b9c1; }
.ft { display: flex; align-items: center; justify-content: space-between; height: 22px; background: #2d3440; border-radius: 4px 10px 6px 0; padding: 0 12px 0 9px; margin-right: 3px; position: relative; }
.ft::before { content: ""; position: absolute; left: -4px; top: 0; width: 16px; height: 22px; background: inherit; border-radius: 7px 0 0 0; transform: skewX(-18deg); }
.ft a { position: relative; }
.t1 { width: 123px; padding-left: 11px; }
.t2 { width: 121px; padding-left: 8px; }
.t3 { width: 200px; padding-left: 8px; }
.ft.on { background: #3b4453; color: #fff; border-radius: 4px 12px 0 0; }
.x { width: 9px; height: 9px; fill: none; stroke: #9ba0a8; stroke-width: 2; }
.plus { width: 21px; height: 16px; margin: 0 0 2px 8px; background: #2d3440; border-radius: 4px 8px 4px 8px; }

/* drawing area */
.work { flex: 1; display: flex; min-height: 0; }
.canvas { flex: 1; min-width: 0; background: #8a8a8a; overflow: hidden; position: relative; margin-left: -1px; }
.sheet { position: absolute; inset: 0; width: 100%; height: 100%; }
.dash { fill: none; stroke: #aaa; stroke-dasharray: 5 2; }
.ln { fill: none; stroke: #1c1c1c; stroke-width: 1.5; }
.city { font: 14px "DejaVu Sans", sans-serif; }
.leg { font: 9px "DejaVu Sans", sans-serif; }
.leg.small { font-size: 8px; }
.north { font: 9px "DejaVu Sans", sans-serif; fill: #555; }
.hash { font: italic bold 8px "DejaVu Sans", sans-serif; fill: #333; }

/* task pane */
.pane { flex: 0 0 290px; display: flex; background: #3b4453; }
.vtabs { width: 22px; padding: 23px 0 0 1px; display: flex; flex-direction: column; }
.vtabs button { writing-mode: vertical-rl; transform: rotate(180deg); height: 121px; background: #2d3340; border: 1px solid #252b36; color: #b4b9c1; border-radius: 0 3px 3px 0; padding: 2px 4px 2px 0; }
.vtabs .on { background: #3b4453; border-color: #3b4453; color: #fff; }
.task { flex: 1; min-width: 0; display: flex; flex-direction: column; }
h2 { height: 21px; background: #2d3340; padding-left: 15px; line-height: 19px; color: #e6e8eb; border-radius: 0 4px 0 0; position: relative; }
h2::before { content: ""; position: absolute; left: 6px; top: 7px; width: 3px; height: 9px; background: repeating-linear-gradient(#8e959f 0 1px, #2d3340 1px 2px); }
.pick { display: flex; align-items: center; padding: 7px 12px 0 13px; }
.pick select { flex: 1; }
.pick label { width: 83px; white-space: nowrap; }
.pick::after { right: 16px; top: 16px; }
.tools { display: flex; margin: 8px 11px 4px; height: 55px; border: 1px solid #72767d; padding: 7px 0 3px; background: linear-gradient(#666a72, #3b4453 7px); position: relative; }
.tools button { flex-direction: column; justify-content: flex-start; padding-top: 2px; line-height: 13px; gap: 2px; height: 44px; }
.t36 { width: 36px; }
.t38 { width: 38px; }
.t46 { width: 47px; }
.t54 { width: 54px; }
.tools .on { background: #2d3340; margin-right: -2px; }
.tip { position: absolute; right: -13px; top: 54px; background: #fff; color: #555; border: 1px solid #666; box-shadow: 3px 3px 3px #222933; line-height: 18px; padding: 0 5px; white-space: nowrap; z-index: 2; }
.tree { flex: 1; border: 1px solid #72767d; margin: 0 11px 17px; }

/* layout tabs and status bar */
footer { background: #222933; }
.ltabs { display: flex; height: 18px; padding-left: 12px; color: #b4b9c1; }
.lt { background: #2d3440; padding: 0 11px; line-height: 17px; border-radius: 0 0 8px 8px; margin-right: 2px; }
.lt.on { background: #3b4453; color: #fff; font-weight: bold; padding: 0 12px; }
.lplus { width: 20px; margin-left: 5px; height: 16px; background: #2d3440; border-radius: 8px 0 8px 0; }
.status { display: flex; justify-content: flex-end; gap: 3px; padding: 4px 2px 1px; height: 30px; }
.sg { display: flex; background: #3b4453; height: 24px; }
.sg button { width: 24px; }
.sg .on { background: #5b8fc5; border: 1px solid #3b4453; }
.sg .dim { background: #4d6d97; }
.sg .dd { width: 15px; }
.sg .dd::before { border-width: 4px 4px 0; }
.sg .tx { width: auto; font-size: 12px; gap: 6px; }
.sg .s31 { width: 31px; }
.sg .s54 { width: 53px; gap: 5px; font-size: 11px; }
.sg .s46 { width: 46px; }
.sg .cap { padding: 0 4px; font-size: 11px; }
.print { gap: 4px; padding: 0 2px; }
```
